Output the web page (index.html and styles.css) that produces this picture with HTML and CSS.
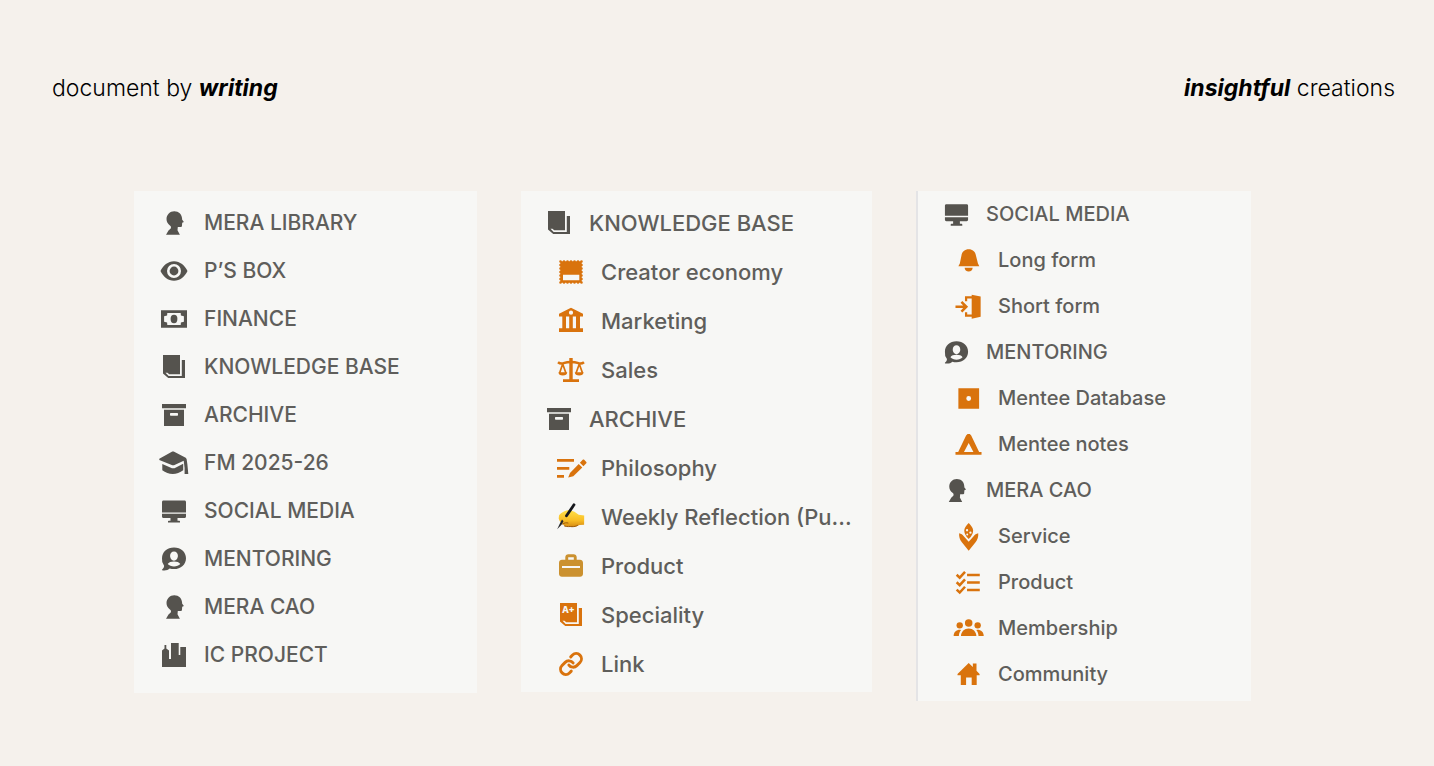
FILE: index.html
```
<!DOCTYPE html>
<html lang="en">
<head>
    <meta charset="UTF-8">
    <meta name="viewport" content="width=device-width, initial-scale=1.0">
    <title>Document by writing</title>
    <link rel="stylesheet" href="styles.css">
</head>
<body>

<!-- Icon shapes, all on a 28x28 grid -->
<svg class="sprite" aria-hidden="true">
    <defs><linearGradient id="skin" x1="0" y1="0" x2="0" y2="1"><stop offset="0" stop-color="#ffe04a"/><stop offset=".6" stop-color="#f9bd24"/><stop offset="1" stop-color="#d58a12"/></linearGradient></defs>
    <symbol id="head" viewBox="0 0 28 28"><path d="M14.3 2.2c4.600 0 7.400 3 7.700 6.800l.2 1.800 1.700 2.200-1.700.8-.3 3.600-.9.600h-3.200l-.3 3.300 2.400 4.500H6l2.500-4.200 2.200-2.200c.5-.9.300-2-.5-2.700C7.800 15 6.500 12.600 6.500 10c0-4.300 3.500-7.800 7.800-7.800z"/></symbol>
    <symbol id="eye" viewBox="0 0 28 28"><path fill-rule="evenodd" d="M.5 14C3 8.500 8 4.200 14 4.200S25 8.500 27.500 14C25 19.500 20 23.800 14 23.800S3 19.500.5 14zM14 7a7 7 0 1 0 0 14 7 7 0 0 0 0-14z"/><circle cx="14" cy="14" r="4.400"/></symbol>
    <symbol id="money" viewBox="0 0 28 28"><path fill-rule="evenodd" d="M1 5.200h26v17.600H1zM7.300 8l-.2 2.500-3 .8v5.400l3 .8.2 2.500h13.400l.2-2.500 3-.8v-5.400l-3-.8-.2-2.500z"/><ellipse cx="14" cy="14" rx="3.400" ry="4.200"/></symbol>
    <symbol id="book" viewBox="0 0 28 28"><path d="M3 2h17v19.300H9.200L7.500 19.700h-2l3.200 3.300h13.100V7H25v18H8.200L3 20.500z"/></symbol>
    <symbol id="archive" viewBox="0 0 28 28"><path fill-rule="evenodd" d="M2 3h24v4.300H2zM4 8.700h20V25H4zM10.700 12a.7.7 0 0 0-.7.7v1.300c0 .4.300.7.700.7h6.600c.4 0 .7-.3.700-.7v-1.300a.7.7 0 0 0-.7-.7z"/></symbol>
    <symbol id="cap" viewBox="0 0 28 28"><path d="M-.7 9.700 12.300 2.500h1.400l12 6.300.9 1.100.8 5.600.9 9.500h-3.700v-6l-.9-7.200L14 16.300h-1.600L-.7 11z"/><path d="M2.300 15l9.700 4.200h2.500l8.700-4.400v6.500C17 26.200 8.500 26.200 2.300 21.300z"/></symbol>
    <symbol id="monitor" viewBox="0 0 28 28"><path d="M3.500 3.400h21c.9 0 1.500.6 1.500 1.500v10.500H2V4.900c0-.9.6-1.500 1.500-1.500zM2 16.800h24v2.700c0 .9-.6 1.500-1.500 1.500h-7v2.700h1.800c.4 0 .7.300.7.700v1.200H8v-1.200c0-.4.300-.7.700-.7h1.800V21h-7c-.9 0-1.500-.6-1.500-1.500z"/></symbol>
    <symbol id="mentor" viewBox="0 0 28 28"><path fill-rule="evenodd" d="M14 2.400c6.900 0 12 4.500 12 10.800s-5.100 10.900-12 10.900c-1.700 0-3-.2-4.300-.6-1.500 1.600-4.500 2.400-7.400 1.800-.4-.1-.5-.6-.1-.9 1.300-.9 1.900-2.100 1.900-3.600A10.300 10.300 0 0 1 2 13.200C2 6.900 7.100 2.400 14 2.400zM14 6.500c-2.300 0-3.900 1.800-3.900 4.300s1.700 4.900 3.900 4.900 3.900-2.400 3.900-4.900-1.600-4.300-3.900-4.300zM7.700 18.900c1.500 1.600 3.700 2.500 6.300 2.500s4.800-.9 6.300-2.500c-1-1.700-3.400-2.500-6.300-2.500s-5.300.8-6.300 2.500z"/></symbol>
    <symbol id="city" viewBox="0 0 28 28"><path d="M2 26V9.500l2.500-2V4h1.800v3.500L9 9.500V18h2V2h7.700v12h1.600V6H26v20z"/></symbol>
    <symbol id="stamp" viewBox="0 0 28 28"><path fill-rule="evenodd" d="M3.300 3.300h21.400v21.400H3.300zM6 16.800v5.400h16.300v-5.400z"/><path d="M3.500 3.500h21v21h-21z" fill="none" stroke="currentColor" stroke-width="2.600" stroke-linecap="round" stroke-dasharray="0 3.500"/></symbol>
    <symbol id="bank" viewBox="0 0 28 28"><path fill-rule="evenodd" d="M14 .8 26 6.700v2.800h-3v11.700h3v3.800H2v-3.800h3.300V9.500H2V6.700zM14 3.600a2.100 2.100 0 1 0 0 4.200 2.100 2.100 0 0 0 0-4.200zM9 9.500v11.700h3.200V9.500zM15.800 9.500v11.700H19V9.500z"/></symbol>
    <symbol id="scales" viewBox="0 0 28 28"><path d="M12.300 2h3.400v21.300h6.300V26H6v-2.700h6.300z"/><g fill="none" stroke="currentColor"><path stroke-width="2.500" d="M1 6.200c2 1.600 4.500 1.500 6.500.6 3-1.200 10-1.200 13 0 2 .9 4.500 1 6.500-.6"/><path stroke-width="1.700" d="M5.700 8 2.600 17M5.700 8l3.200 9M22.300 8l-3.200 9M22.300 8l3.200 9"/></g><path d="M1.500 16.200h8.700c0 2.100-1.700 3.200-4.400 3.200s-4.300-1.100-4.300-3.200zM17.800 16.200h8.700c0 2.100-1.700 3.200-4.300 3.200s-4.400-1.100-4.400-3.200z"/></symbol>
    <symbol id="write" viewBox="0 0 28 28"><path d="M0 5h17v2.700H0zM0 13h12.300v2.700H0zM0 21h7v2.700H0zM11.200 23.600l1.800-4.700L21.700 10l3.600 3.500-9 8.800zM22.900 8.800l2.800-3c.5-.5 1-.5 1.500 0l2.100 2.100c.4.500.4.900 0 1.300l-2.900 3z"/></symbol>
    <symbol id="hand" viewBox="0 0 28 28">
        <path fill="url(#skin)" d="M2 12.500C4 9.500 9 6.500 13 7.300l4.500 1.500 4.200 3 5.500.6-.1 9.300-4.600.3c-2.300 1.200-4.300 2-7 2-3.500 0-7.600-.1-9-1.900L4.800 20C2.500 19 2.500 17 1.700 15.500z"/>
        <path fill="none" stroke="#9b5a0c" stroke-width="1" stroke-linecap="round" d="M5.500 21c2-1.300 4-1.500 5.500-1M7.500 23c3 1.200 5 .2 7.500.7 2.500 0 4-.5 5.500-1.300"/>
        <path fill="none" stroke="#15171b" stroke-width="2.800" stroke-linecap="round" d="m17 1.800-7.500 11"/>
        <path d="M5 16.500 3 20.300l-2.800 5.900 4.300-4.400 2-3.500z" fill="#25272b"/>
    </symbol>
    <symbol id="case" viewBox="0 0 28 28"><path fill-rule="evenodd" d="M8.300 7.700V5.200c0-1.700 1.300-3 3-3h5.400c1.700 0 3 1.300 3 3v2.500H23c1.700 0 3 1.300 3 3v11c0 1.700-1.300 3-3 3H5c-1.700 0-3-1.300-3-3v-11c0-1.700 1.300-3 3-3zM11.200 7.700h5.600V5.200h-5.600zM5 14v2h18v-2z"/></symbol>
    <symbol id="link" viewBox="0 0 28 28"><g transform="matrix(1.050 0 0 1.050 1.400 1.400)" fill="none" stroke="currentColor" stroke-width="2.800" stroke-linecap="round"><path d="M10 13a5 5 0 0 0 7.540.54l3-3a5 5 0 0 0-7.070-7.070l-1.720 1.710"/><path d="M14 11a5 5 0 0 0-7.540-.54l-3 3a5 5 0 0 0 7.070 7.070l1.710-1.710"/></g></symbol>
    <symbol id="bell" viewBox="0 0 28 28"><path d="M14.200 2.400c4 0 6.800 2.500 7.500 6.300L23.800 17l1.400 3H3.500L5 17l1.700-8.300c.7-3.800 3.500-6.300 7.500-6.300zM10 21.600h8.300c0 2.200-1.700 3.800-4.100 3.800S10 23.800 10 21.600z"/></symbol>
    <symbol id="door" viewBox="0 0 28 28"><path d="m17.300 1.700 9.300 1.800v21.200l-9.300 1.900z"/><path d="M18 4.500h-6.500v4M18 23.500h-6.500V20" fill="none" stroke="currentColor" stroke-width="2.300"/><path d="M.5 13h8L5.800 10.200 7.600 8.300l6 5.900-6 6-1.800-1.900 2.700-2.800h-8z"/></symbol>
    <symbol id="square" viewBox="0 0 28 28"><path fill-rule="evenodd" d="M3.500 3.300H25v21.400H3.500zM14.200 11.500a2.500 2.500 0 1 0 0 5 2.500 2.500 0 0 0 0-5z"/></symbol>
    <symbol id="tent" viewBox="0 0 28 28"><path fill-rule="evenodd" d="M13 3.200h2.400l1.400 1.400L25 21.800h2.500v2.700H.5v-2.700h2.800l8.200-17.200zM14.200 12.500 9.300 21.800h9.800z"/></symbol>
    <symbol id="sprout" viewBox="0 0 28 28"><path d="M14.200 0c2.800 2.800 4.600 5.300 4.600 8s-1.600 5.600-4.600 8.600c-3-3-4.600-5.900-4.600-8.600s1.800-5.200 4.600-8z"/><path d="M4.300 10.500c2 .3 3.600 1.500 5 3.600l4.900 5.400 4.900-5.400c1.400-2.100 3-3.300 5-3.600.3 3.400-.6 6.400-2.800 9.400l-7.100 9-7.100-9c-2.200-3-3.100-6-2.800-9.400z"/><g fill="#f7f7f5"><circle cx="12.500" cy="7.500" r="1.200"/><circle cx="16" cy="10" r="1.200"/><circle cx="12.700" cy="12" r="1"/></g></symbol>
    <symbol id="checks" viewBox="0 0 28 28"><path d="M12.500 5h13.200v2.600H12.500zM12.500 12.700h13.200v2.600H12.500zM12.500 20.400h13.200V23H12.500z"/><path d="m1.700 6 3.200 3 5.500-6M1.700 13.700l3.200 3 5.500-6M1.700 21.400l3.200 3 5.500-6" fill="none" stroke="currentColor" stroke-width="2.600"/></symbol>
    <symbol id="people" viewBox="0 0 28 28"><circle cx="14.200" cy="8.300" r="3.900"/><circle cx="4.900" cy="10.700" r="3.300"/><circle cx="23.500" cy="10.700" r="3.300"/><path d="M6.200 21.800c.3-4.500 3.500-7.700 8-7.700s7.700 3.200 8 7.700zM-1.400 21.800c.1-3.800 2.500-6.400 6.700-6.400l1 .1c-1.400 1.600-2.200 3.700-2.300 6.300zM29.800 21.800c-.1-3.800-2.500-6.400-6.700-6.400l-1 .1c1.400 1.600 2.200 3.700 2.300 6.300z"/></symbol>
    <symbol id="house" viewBox="0 0 28 28"><path d="M14.200 2 18.500 6.200V2.700h3.800V10l3.200 3.600v1.200h-3V25h-5.200v-8h-5.800v8H6V14.800H2.600v-1.200z"/></symbol>
</svg>

<header class="header">
    <p class="tagline">document by <strong>writing</strong></p>
    <p class="tagline"><strong>insightful</strong> creations</p>
</header>

<main class="panels">
    <nav class="panel panel-main" aria-label="Workspace">
        <a class="item" href="#"><svg class="icon"><use href="#head"/></svg><span>MERA LIBRARY</span></a>
        <a class="item" href="#"><svg class="icon"><use href="#eye"/></svg><span>P’S BOX</span></a>
        <a class="item" href="#"><svg class="icon"><use href="#money"/></svg><span>FINANCE</span></a>
        <a class="item" href="#"><svg class="icon"><use href="#book"/></svg><span>KNOWLEDGE BASE</span></a>
        <a class="item" href="#"><svg class="icon"><use href="#archive"/></svg><span>ARCHIVE</span></a>
        <a class="item" href="#"><svg class="icon"><use href="#cap"/></svg><span>FM 2025-26</span></a>
        <a class="item" href="#"><svg class="icon"><use href="#monitor"/></svg><span>SOCIAL MEDIA</span></a>
        <a class="item" href="#"><svg class="icon"><use href="#mentor"/></svg><span>MENTORING</span></a>
        <a class="item" href="#"><svg class="icon"><use href="#head"/></svg><span>MERA CAO</span></a>
        <a class="item" href="#"><svg class="icon"><use href="#city"/></svg><span>IC PROJECT</span></a>
    </nav>

    <nav class="panel panel-knowledge" aria-label="Knowledge base">
        <a class="item" href="#"><svg class="icon"><use href="#book"/></svg><span>KNOWLEDGE BASE</span></a>
        <a class="item child" href="#"><svg class="icon"><use href="#stamp"/></svg><span>Creator economy</span></a>
        <a class="item child" href="#"><svg class="icon"><use href="#bank"/></svg><span>Marketing</span></a>
        <a class="item child" href="#"><svg class="icon"><use href="#scales"/></svg><span>Sales</span></a>
        <a class="item" href="#"><svg class="icon"><use href="#archive"/></svg><span>ARCHIVE</span></a>
        <a class="item child" href="#"><svg class="icon"><use href="#write"/></svg><span>Philosophy</span></a>
        <a class="item child" href="#"><svg class="icon"><use href="#hand"/></svg><span>Weekly Reflection (Pu...</span></a>
        <a class="item child" href="#"><svg class="icon gold"><use href="#case"/></svg><span>Product</span></a>
        <a class="item child" href="#"><svg class="icon" viewBox="0 0 28 28"><use href="#book" width="28" height="28"/><text class="grade" x="5" y="12">A+</text></svg><span>Speciality</span></a>
        <a class="item child" href="#"><svg class="icon"><use href="#link"/></svg><span>Link</span></a>
    </nav>

    <nav class="panel panel-social" aria-label="Social media">
        <a class="item" href="#"><svg class="icon"><use href="#monitor"/></svg><span>SOCIAL MEDIA</span></a>
        <a class="item child" href="#"><svg class="icon"><use href="#bell"/></svg><span>Long form</span></a>
        <a class="item child" href="#"><svg class="icon"><use href="#door"/></svg><span>Short form</span></a>
        <a class="item" href="#"><svg class="icon"><use href="#mentor"/></svg><span>MENTORING</span></a>
        <a class="item child" href="#"><svg class="icon"><use href="#square"/></svg><span>Mentee Database</span></a>
        <a class="item child" href="#"><svg class="icon"><use href="#tent"/></svg><span>Mentee notes</span></a>
        <a class="item" href="#"><svg class="icon"><use href="#head"/></svg><span>MERA CAO</span></a>
        <a class="item child" href="#"><svg class="icon"><use href="#sprout"/></svg><span>Service</span></a>
        <a class="item child" href="#"><svg class="icon"><use href="#checks"/></svg><span>Product</span></a>
        <a class="item child" href="#"><svg class="icon"><use href="#people"/></svg><span>Membership</span></a>
        <a class="item child" href="#"><svg class="icon"><use href="#house"/></svg><span>Community</span></a>
    </nav>
</main>

</body>
</html>
```
FILE: styles.css
```
body {
    background-color: #f5f1ec;
    color: #5f5e5b;
    font-family: Inter, 'Liberation Sans', sans-serif;
    margin: 0;
}

.sprite {
    display: block;
    width: 0;
    height: 0;
}

.header {
    display: flex;
    justify-content: space-between;
    padding: 72px 39px 0 52px;
}

.tagline {
    margin: 0;
    color: #000;
    font-size: 23px;
    font-weight: 300;
    line-height: 32px;
}

.tagline strong {
    font-style: italic;
    font-weight: 700;
}

.panels {
    display: grid;
    grid-template-columns: 343fr 351fr 335fr;
    gap: 44px;
    align-items: start;
    padding: 87px 183px 65px 134px;
}

.panel {
    display: flex;
    flex-direction: column;
    background-color: #f7f7f5;
    font-weight: 500;
    line-height: 30px;
}

.panel-main {
    gap: 18px;
    padding: 17px 16px 23px 26px;
    font-size: 21px;
}

.panel-knowledge {
    gap: 19px;
    padding: 17px 16px 13px 24px;
    font-size: 22px;
}

.panel-social {
    gap: 16px;
    padding: 8px 16px 12px 25px;
    border-left: 2px solid #e4e4e6;
    font-size: 20px;
}

.item {
    display: flex;
    align-items: center;
    gap: 16px;
    color: inherit;
    text-decoration: none;
    white-space: nowrap;
}

.child {
    padding-left: 12px;
}

.icon {
    flex: none;
    width: 28px;
    height: 28px;
    overflow: visible;
    color: #55534e;
    fill: currentColor;
}

symbol {
    overflow: visible;
}

.child .icon {
    color: #d9730d;
}

.child .gold {
    color: #cb912f;
}

.panel-social .icon {
    width: 27px;
    height: 27px;
}

.grade {
    fill: #f7f7f5;
    font-size: 9px;
    font-weight: 800;
}
```
